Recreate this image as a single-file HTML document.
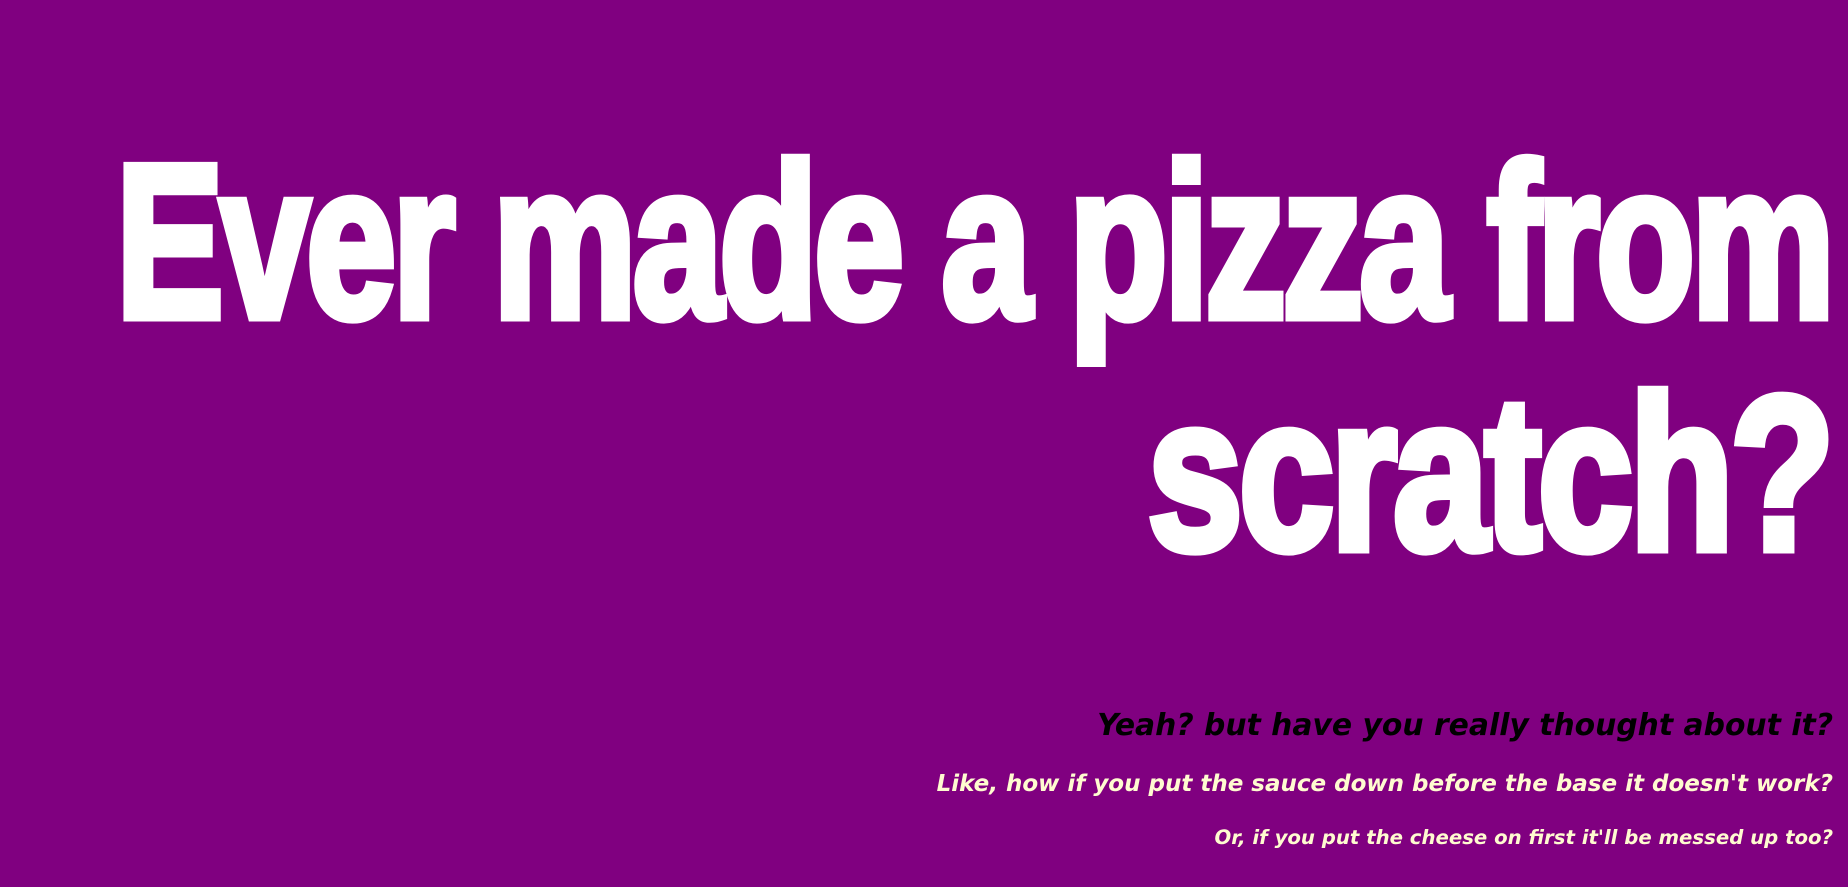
<!DOCTYPE html>
<html><head><meta charset="utf-8"><style>
html,body{margin:0;padding:0;background:#800080;width:1848px;height:887px;overflow:hidden}
.big{position:absolute;right:17px;font-family:"Liberation Sans",sans-serif;font-weight:bold;font-size:219px;line-height:219px;color:#fff;white-space:nowrap;transform-origin:right center;-webkit-text-stroke:9px #fff;letter-spacing:-5px}
.s{position:absolute;right:15px;font-family:"DejaVu Sans",sans-serif;font-weight:bold;font-style:italic;line-height:1;white-space:nowrap}
</style></head><body>
<div class="big" style="top:133px;transform:scaleX(0.738)">Ever made a pizza from</div>
<div class="big" style="top:365px;transform:scaleX(0.783)">scratch?</div>
<div class="s" style="top:711px;font-size:29.8px;color:#000">Yeah? but have you really thought about it?</div>
<div class="s" style="top:773px;font-size:23px;color:#fffbd0">Like, how if you put the sauce down before the base it doesn't work?</div>
<div class="s" style="top:828px;font-size:19.7px;color:#fffbd0">Or, if you put the cheese on first it'll be messed up too?</div>
</body></html>
